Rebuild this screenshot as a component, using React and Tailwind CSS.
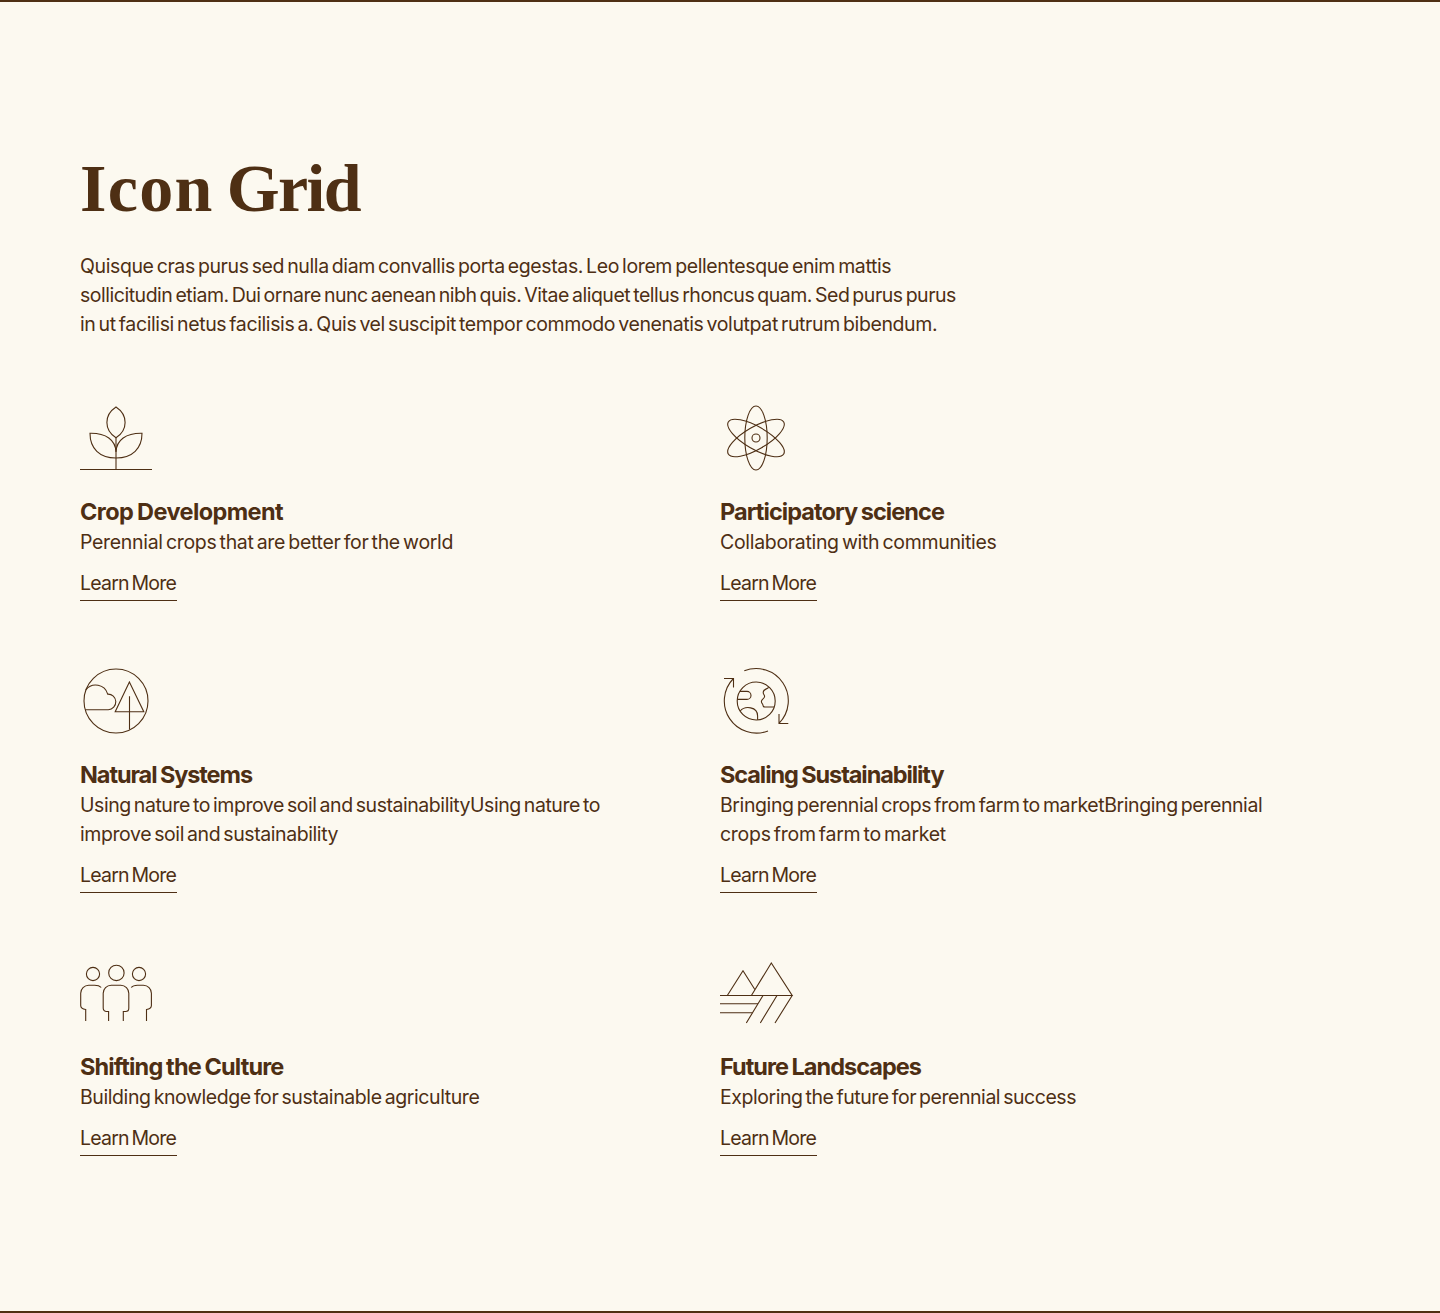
const ICONS = {
  plant: (
    <>
      <path d="M0 67.5H72M36 35.7V67.5" />
      <path d="M36 35.7C29.5 31.5 26.9 26 26.9 20.4S29.5 9.300 36 5C42.500 9.300 45.100 14.800 45.100 20.400S42.500 31.500 36 35.700Z" />
      <path d="M36 50C35.500 38 26 31 10 31.300C10 46.500 19.500 56 36 56S62 46.500 62 31.300C46 31 36.500 38 36 50Z" />
    </>
  ),
  atom: (
    <>
      <ellipse cx="36" cy="36" rx="11.200" ry="32" />
      <ellipse cx="36" cy="36" rx="11.200" ry="32" transform="rotate(60 36 36)" />
      <ellipse cx="36" cy="36" rx="11.200" ry="32" transform="rotate(-60 36 36)" />
      <circle cx="36" cy="36" r="4" />
    </>
  ),
  nature: (
    <>
      <circle cx="36" cy="36" r="32" />
      <path d="M5.300 44.700H28.300A7.700 7.700 0 0 0 27.700 29.100A12.500 12.500 0 0 0 5.900 24.800" />
      <path d="M49.400 17L35.200 46.700H63.800ZM49.500 31.300V64.500" />
    </>
  ),
  globe: (
    <>
      <circle cx="36.200" cy="36" r="19" />
      <path d="M24.300 5.800A32.200 32.200 0 0 1 59 58.400M59 49V58.500H68.300" />
      <path d="M48 66A32.200 32.200 0 0 1 13.400 13.500M4 13.500H13.500V22.400" />
      <path d="M19.800 26.400H27A4 4 0 0 1 27 34.400H17.400" />
      <path d="M20.200 46C25 40.500 37.600 41.500 37.600 51V54.800" />
      <path d="M48.700 22.300C46.500 24.800 43.200 23.800 43.200 27.500C43.200 29.500 44.700 30 44.600 31.500C44.500 33.800 41.400 34 41.400 36.500C41.400 38.500 42.900 38.600 42.900 40C42.900 41.600 43.800 42 45 42H54.300" />
    </>
  ),
  people: (
    <>
      <circle cx="13" cy="17" r="6.600" />
      <circle cx="36.400" cy="15.900" r="7.700" />
      <circle cx="59" cy="17" r="6.600" />
      <path d="M28.600 64V54.500H26.500A3.300 3.300 0 0 1 23.200 51.200V36.200A8 8 0 0 1 31.200 28.200H40.800A8 8 0 0 1 48.800 36.200V51.200A3.300 3.300 0 0 1 45.500 54.500H43.300V64" />
      <path d="M5.700 64V52.500C2.500 52 .700 51 .700 48.500V36.200A8 8 0 0 1 8.700 28.200H14.500C17.500 28.200 19.500 28.600 21.200 30.500" />
      <path d="M66.500 64V52.500C69.700 52 71.400 51 71.400 48.500V36.200A8 8 0 0 0 63.400 28.200H57.500C54.500 28.200 52.700 28.600 51.200 30.500" />
    </>
  ),
  fields: (
    <>
      <path d="M0 38.500H72.200L51.300 6L31.400 38.500M7.300 38.500L23 13.700L35 32.700" />
      <path d="M72.200 38.500L55 66M57 38.500L40.300 66M43 38.500L26.300 66" />
      <path d="M0 46.700H38M0 55.700H32.500" />
    </>
  ),
};

const ITEMS = [
  { icon: "plant", title: "Crop Development", ts: "tracking-[-0.61px]", lines: [["Perennial crops that are better for the world", "tracking-[-0.314px]"]] },
  { icon: "atom", title: "Participatory science", ts: "tracking-[-0.94px]", lines: [["Collaborating with communities", "tracking-[-0.313px]"]] },
  {
    icon: "nature", title: "Natural Systems", ts: "tracking-[-1.09px]",
    lines: [
      ["Using nature to improve soil and sustainabilityUsing nature to", "tracking-[-0.446px]"],
      ["improve soil and sustainability", "tracking-[-0.413px]"],
    ],
  },
  {
    icon: "globe", title: "Scaling Sustainability", ts: "tracking-[-1.08px]",
    lines: [
      ["Bringing perennial crops from farm to marketBringing perennial", "tracking-[-0.407px]"],
      ["crops from farm to market", "tracking-[-0.29px]"],
    ],
  },
  { icon: "people", title: "Shifting the Culture", ts: "tracking-[-0.86px]", lines: [["Building knowledge for sustainable agriculture", "tracking-[-0.413px]"]] },
  { icon: "fields", title: "Future Landscapes", ts: "tracking-[-0.98px]", lines: [["Exploring the future for perennial success", "tracking-[-0.456px]"]] },
];

const INTRO = [
  ["Quisque cras purus sed nulla diam convallis porta egestas. Leo lorem pellentesque enim mattis", "tracking-[-0.39px]"],
  ["sollicitudin etiam. Dui ornare nunc aenean nibh quis. Vitae aliquet tellus rhoncus quam. Sed purus purus", "tracking-[-0.476px]"],
  ["in ut facilisi netus facilisis a. Quis vel suscipit tempor commodo venenatis volutpat rutrum bibendum.", "tracking-[-0.383px]"],
];

function Copy({ lines }) {
  return (
    <p className="text-[19.5px] leading-[29px] [word-spacing:-2px]">
      {lines.map(([text, spacing]) => (
        <span key={text} className={`block whitespace-nowrap ${spacing}`}>{text} </span>
      ))}
    </p>
  );
}

function Item({ icon, title, ts, lines }) {
  return (
    <article className="flex flex-col items-start">
      <svg className="mb-[22px] size-[72px] overflow-visible" viewBox="0 0 72 72" fill="none" stroke="currentColor" strokeWidth="1.100">
        {ICONS[icon]}
      </svg>
      <h3 className={`mb-px whitespace-nowrap text-[23.5px] leading-[31px] font-bold [word-spacing:-1px] ${ts}`}>{title}</h3>
      <Copy lines={lines} />
      <a href="#" className="mt-3 h-8 w-[97px] whitespace-nowrap border-b border-current text-[19.5px] leading-[29px] tracking-[-0.79px] [word-spacing:-2px]">
        Learn More
      </a>
    </article>
  );
}

export default function App() {
  return (
    <section className="h-[1313px] overflow-hidden border-y-2 border-[#4e2f14] bg-[#fcf9f0] px-20 pt-[148px] font-['Inter',sans-serif] text-[#4e2f14]">
      <h1 className="mb-[25px] h-[77px] whitespace-nowrap font-['Liberation_Serif',serif] text-[68px] leading-[77px] font-bold [word-spacing:-4px]">
        <span className="tracking-[1.3px]">Icon</span> <span className="tracking-[-1.6px]">Grid</span>
      </h1>
      <Copy lines={INTRO} />
      <div className="mt-[63px] grid grid-cols-2 gap-y-16">
        {ITEMS.map((item) => (
          <Item key={item.title} {...item} />
        ))}
      </div>
    </section>
  );
}
